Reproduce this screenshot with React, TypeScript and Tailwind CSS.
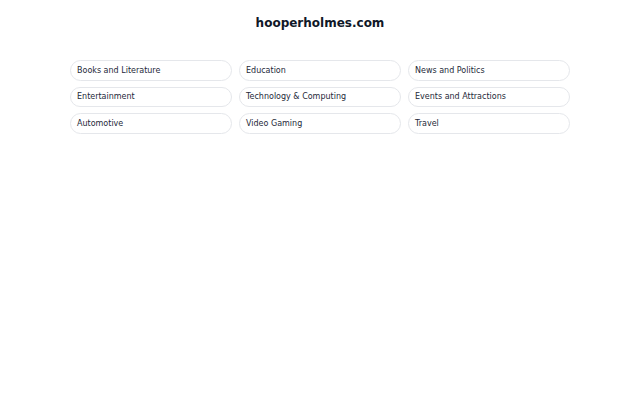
const categories = [
  'Books and Literature',
  'Education',
  'News and Politics',
  'Entertainment',
  'Technology & Computing',
  'Events and Attractions',
  'Automotive',
  'Video Gaming',
  'Travel',
]

export default function App() {
  return (
    <div
      className="min-h-screen bg-white"
      style={{ fontFamily: "'DejaVu Sans', sans-serif" }}
    >
      <div className="pt-[15px] text-center">
        <h1 className="text-[12px] leading-[16px] font-bold text-gray-900">hooperholmes.com</h1>
      </div>

      <div className="mx-auto mt-[29px] w-[500px] grid grid-cols-3 gap-x-[7px] gap-y-[6px]">
        {categories.map((c) => (
          <div
            key={c}
            className="h-[20.5px] flex items-center rounded-full border border-gray-200 px-[6px] pt-[1px] text-[8px] text-gray-800"
          >
            {c}
          </div>
        ))}
      </div>
    </div>
  )
}
